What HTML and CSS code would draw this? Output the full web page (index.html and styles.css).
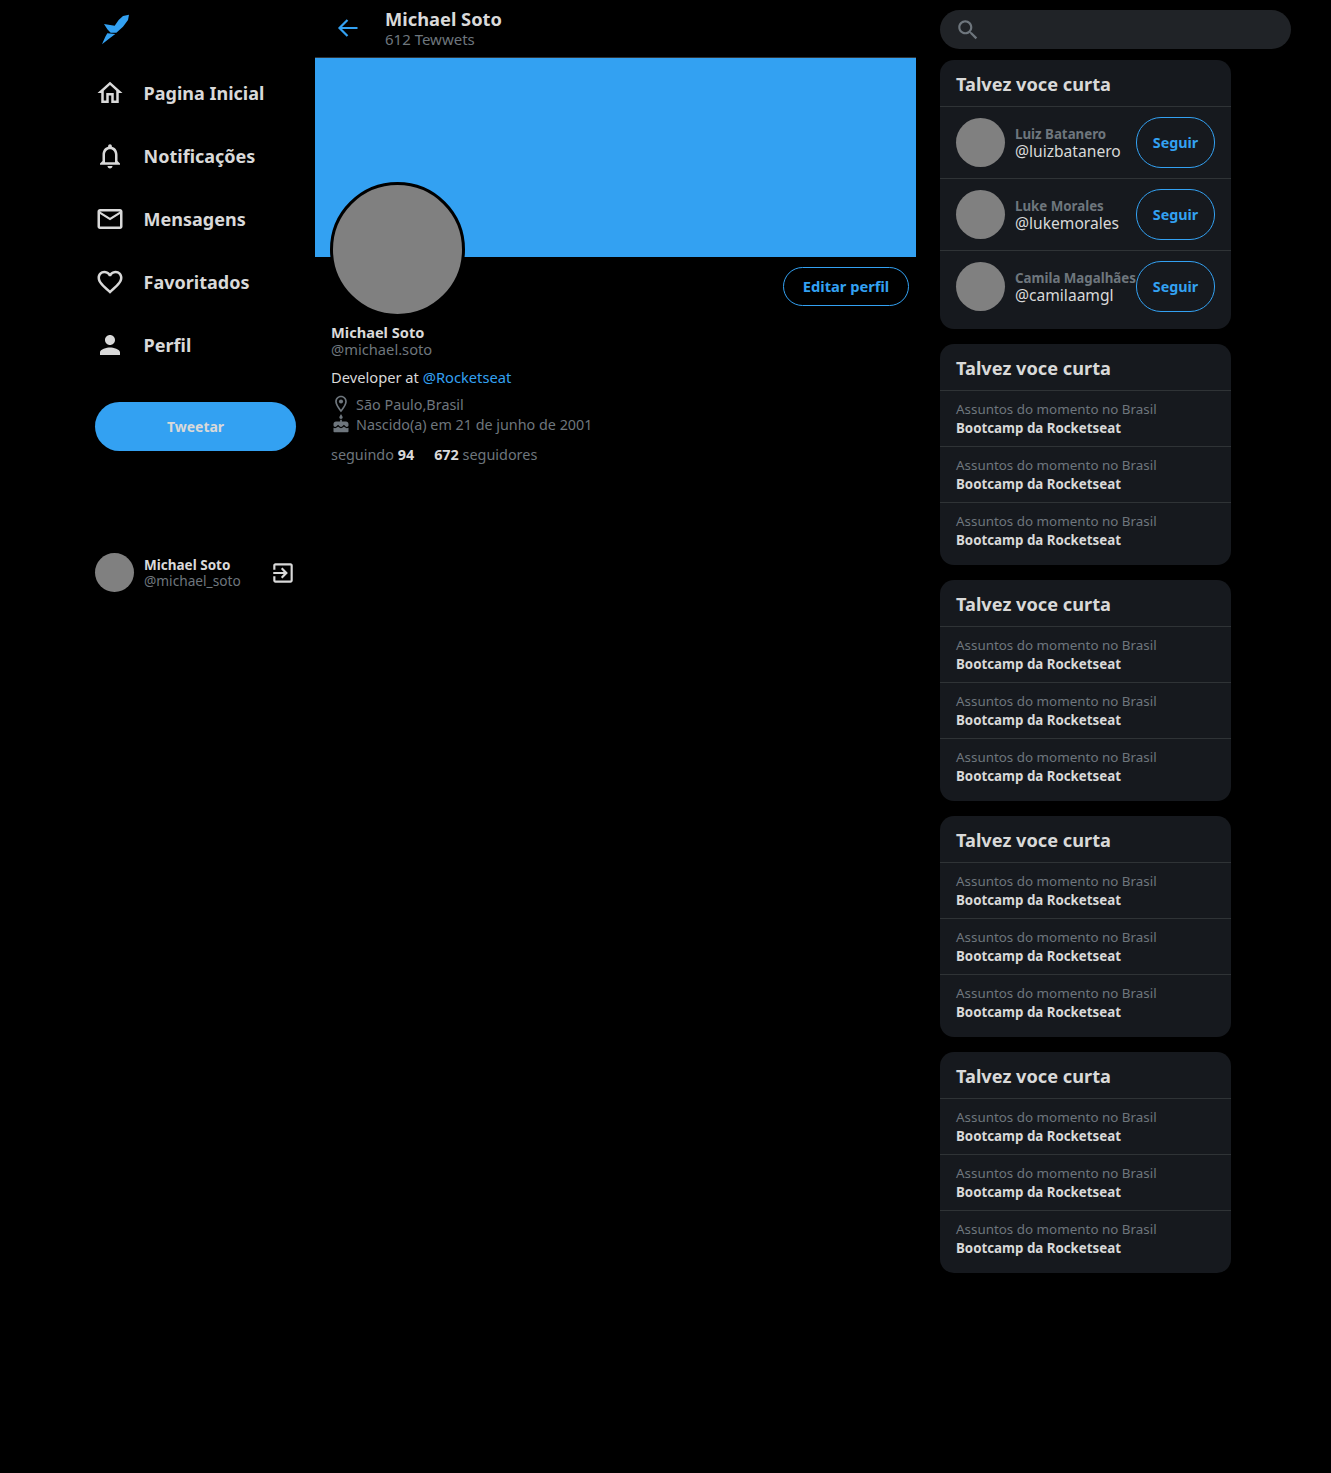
FILE: index.html
```html
<!DOCTYPE html>
<html lang="en">
<head>
    <meta charset="UTF-8">
    <title>Michael Soto</title>
    <link rel="stylesheet" href="styles.css">
</head>
<body>
    <div class="layout">
        <aside class="sidebar">
            <svg class="logo" viewBox="0 0 108 114"><path fill="#33a1f2" d="M93 14l-3 16-15 20-20 18H38L28 58 18 42l32 5 12-17 13-12zM28 70l24 2-17 13-23 18 10-23z"/></svg>
            <nav class="nav">
                <a class="nav-item"><svg class="nav-icon" viewBox="0 0 24 24"><path d="M12 5.690l5 4.500V18h-2v-6H9v6H7v-7.810l5-4.500M12 3L2 12h3v8h6v-6h2v6h6v-8h3L12 3z"/></svg><span>Pagina Inicial</span></a>
                <a class="nav-item"><svg class="nav-icon" viewBox="0 0 24 24"><path d="M12 22c1.100 0 2-.9 2-2h-4c0 1.100.9 2 2 2zm6-6v-5c0-3.070-1.630-5.640-4.500-6.320V4c0-.83-.67-1.500-1.500-1.500s-1.500.67-1.500 1.500v.68C7.640 5.360 6 7.920 6 11v5l-2 2v1h16v-1l-2-2zm-2 1H8v-6c0-2.480 1.510-4.500 4-4.500s4 2.020 4 4.500v6z"/></svg><span>Notificações</span></a>
                <a class="nav-item"><svg class="nav-icon" viewBox="0 0 24 24"><path d="M22 6c0-1.100-.9-2-2-2H4c-1.100 0-2 .9-2 2v12c0 1.100.9 2 2 2h16c1.100 0 2-.9 2-2V6zm-2 0l-8 5-8-5h16zm0 12H4V8l8 5 8-5v10z"/></svg><span>Mensagens</span></a>
                <a class="nav-item"><svg class="nav-icon" viewBox="0 0 24 24"><path d="M16.500 3c-1.740 0-3.410.81-4.500 2.090C10.910 3.810 9.240 3 7.500 3 4.420 3 2 5.420 2 8.500c0 3.780 3.400 6.860 8.550 11.540L12 21.350l1.450-1.320C18.600 15.360 22 12.280 22 8.500 22 5.420 19.580 3 16.500 3zm-4.400 15.550l-.1.1-.1-.1C7.140 14.240 4 11.390 4 8.500 4 6.500 5.500 5 7.500 5c1.540 0 3.040.99 3.570 2.360h1.870C13.460 5.990 14.960 5 16.500 5c2 0 3.500 1.500 3.500 3.500 0 2.890-3.140 5.740-7.900 10.050z"/></svg><span>Favoritados</span></a>
                <a class="nav-item"><svg class="nav-icon" viewBox="0 0 24 24"><path d="M12 12c2.210 0 4-1.790 4-4s-1.790-4-4-4-4 1.790-4 4 1.790 4 4 4zm0 2c-2.670 0-8 1.340-8 4v2h16v-2c0-2.660-5.330-4-8-4z"/></svg><span>Perfil</span></a>
            </nav>
            <button class="tweet-btn">Tweetar</button>
            <div class="account">
                <div class="avatar avatar-sm"></div>
                <div class="account-text">
                    <strong>Michael Soto</strong>
                    <span>@michael_soto</span>
                </div>
                <svg class="exit-icon" viewBox="0 0 24 24"><path d="M10.090 15.590L11.500 17l5-5-5-5-1.410 1.410L12.670 11H3v2h9.670l-2.580 2.590zM19 3H5c-1.110 0-2 .9-2 2v4h2V5h14v14H5v-4H3v4c0 1.100.89 2 2 2h14c1.100 0 2-.9 2-2V5c0-1.100-.9-2-2-2z"/></svg>
            </div>
        </aside>

        <main class="main">
            <header class="main-header">
                <svg class="back-icon" viewBox="0 0 24 24"><path d="M3.500 12H21.500M11.500 4L3.500 12L11.500 20"/></svg>
                <div>
                    <h1>Michael Soto</h1>
                    <span class="tweet-count">612 Tewwets</span>
                </div>
            </header>
            <div class="banner"></div>
            <div class="profile-top">
                <div class="avatar avatar-lg"></div>
                <button class="outline-btn edit-btn">Editar perfil</button>
            </div>
            <div class="profile">
                <strong class="profile-name">Michael Soto</strong>
                <span class="profile-handle">@michael.soto</span>
                <p class="bio">Developer at <a>@Rocketseat</a></p>
                <div class="meta">
                    <svg viewBox="0 0 24 24"><path d="M12 2C8.130 2 5 5.130 5 9c0 5.250 7 13 7 13s7-7.750 7-13c0-3.870-3.130-7-7-7zM7 9c0-2.760 2.240-5 5-5s5 2.240 5 5c0 2.880-2.880 7.190-5 9.880C9.920 16.210 7 11.850 7 9z"/><circle cx="12" cy="9" r="2.500"/></svg>
                    <span class="place">São Paulo,Brasil</span>
                </div>
                <div class="meta">
                    <svg viewBox="0 0 24 24"><path d="M12 6c1.110 0 2-.9 2-2 0-.38-.1-.73-.29-1.030L12 0l-1.710 2.970c-.19.3-.29.65-.29 1.030 0 1.100.9 2 2 2zm4.600 9.990l-1.070-1.070-1.080 1.070c-1.300 1.300-3.580 1.310-4.890 0l-1.070-1.070-1.090 1.070C6.750 16.640 5.880 17 4.960 17c-.73 0-1.400-.23-1.960-.61V21c0 .55.45 1 1 1h16c.55 0 1-.45 1-1v-4.610c-.56.38-1.230.61-1.960.61-.92 0-1.790-.36-2.440-1.010zM18 9h-5V7h-2v2H6c-1.660 0-3 1.340-3 3v1.540c0 1.080.88 1.960 1.960 1.960.52 0 1.020-.2 1.380-.57l2.140-2.130 2.130 2.130c.74.74 2.030.74 2.770 0l2.140-2.130 2.130 2.130c.37.37.86.57 1.380.57 1.080 0 1.960-.88 1.960-1.960V12C21 10.340 19.660 9 18 9z"/></svg>
                    <span class="born">Nascido(a) em 21 de junho de 2001</span>
                </div>
                <div class="follows">
                    <span>seguindo <b>94</b></span>
                    <span><b>672</b> seguidores</span>
                </div>
            </div>
        </main>

        <aside class="right">
            <div class="search">
                <svg viewBox="0 0 24 24"><path d="M15.500 14h-.79l-.28-.27C15.410 12.590 16 11.110 16 9.500 16 5.910 13.090 3 9.500 3S3 5.910 3 9.500 5.910 16 9.500 16c1.610 0 3.090-.59 4.230-1.570l.27.28v.79l5 4.990L20.490 19l-4.990-5zm-6 0C7.010 14 5 11.990 5 9.500S7.010 5 9.500 5 14 7.010 14 9.500 11.990 14 9.500 14z"/></svg>
            </div>

            <section class="card">
                <h2>Talvez voce curta</h2>
                <div class="user-row">
                    <div class="avatar avatar-md"></div>
                    <div class="user-text"><strong>Luiz Batanero</strong><span>@luizbatanero</span></div>
                    <button class="outline-btn follow-btn">Seguir</button>
                </div>
                <div class="user-row">
                    <div class="avatar avatar-md"></div>
                    <div class="user-text"><strong>Luke Morales</strong><span>@lukemorales</span></div>
                    <button class="outline-btn follow-btn">Seguir</button>
                </div>
                <div class="user-row">
                    <div class="avatar avatar-md"></div>
                    <div class="user-text"><strong>Camila Magalhães</strong><span>@camilaamgl</span></div>
                    <button class="outline-btn follow-btn">Seguir</button>
                </div>
            </section>

            <section class="card">
                <h2>Talvez voce curta</h2>
                <div class="trend"><span>Assuntos do momento no Brasil</span><strong>Bootcamp da Rocketseat</strong></div>
                <div class="trend"><span>Assuntos do momento no Brasil</span><strong>Bootcamp da Rocketseat</strong></div>
                <div class="trend"><span>Assuntos do momento no Brasil</span><strong>Bootcamp da Rocketseat</strong></div>
            </section>

            <section class="card">
                <h2>Talvez voce curta</h2>
                <div class="trend"><span>Assuntos do momento no Brasil</span><strong>Bootcamp da Rocketseat</strong></div>
                <div class="trend"><span>Assuntos do momento no Brasil</span><strong>Bootcamp da Rocketseat</strong></div>
                <div class="trend"><span>Assuntos do momento no Brasil</span><strong>Bootcamp da Rocketseat</strong></div>
            </section>

            <section class="card">
                <h2>Talvez voce curta</h2>
                <div class="trend"><span>Assuntos do momento no Brasil</span><strong>Bootcamp da Rocketseat</strong></div>
                <div class="trend"><span>Assuntos do momento no Brasil</span><strong>Bootcamp da Rocketseat</strong></div>
                <div class="trend"><span>Assuntos do momento no Brasil</span><strong>Bootcamp da Rocketseat</strong></div>
            </section>

            <section class="card">
                <h2>Talvez voce curta</h2>
                <div class="trend"><span>Assuntos do momento no Brasil</span><strong>Bootcamp da Rocketseat</strong></div>
                <div class="trend"><span>Assuntos do momento no Brasil</span><strong>Bootcamp da Rocketseat</strong></div>
                <div class="trend"><span>Assuntos do momento no Brasil</span><strong>Bootcamp da Rocketseat</strong></div>
            </section>
        </aside>
    </div>
</body>
</html>
```

FILE: styles.css
```css
* {
    box-sizing: border-box;
}
body {
    margin: 0;
    background-color: #000;
    color: #d9d9d9;
    font-family: "Noto Sans", sans-serif;
    font-size: 14px;
    height: 1473px;
    overflow: hidden;
}
.layout {
    display: flex;
    padding-left: 95px;
}

/* sidebar */
.sidebar {
    width: 201px;
    margin-right: 19px;
    flex-shrink: 0;
}
.logo {
    display: block;
    width: 36px;
    height: 38px;
    margin: 10px 0 0 3px;
}
.nav {
    display: flex;
    flex-direction: column;
    margin-top: 13px;
}
.nav-item {
    display: flex;
    align-items: center;
    height: 63px;
    font-size: 18px;
    font-weight: 700;
}
.nav-icon {
    width: 30px;
    height: 30px;
    margin-right: 18.600px;
    fill: #d9d9d9;
}
.tweet-btn {
    display: block;
    width: 201px;
    height: 49px;
    margin-top: 26px;
    border: 0;
    border-radius: 25px;
    background-color: #33a1f2;
    color: #d9d9d9;
    font-family: inherit;
    font-size: 14px;
    font-weight: 700;
}
.account {
    display: flex;
    align-items: center;
    margin-top: 102px;
}
.avatar {
    border-radius: 50%;
    background-color: #808080;
    flex-shrink: 0;
}
.avatar-sm {
    width: 39px;
    height: 39px;
    margin-right: 10px;
}
.account-text {
    display: flex;
    flex-direction: column;
    flex: 1;
    line-height: 16px;
}
.account-text strong {
    font-size: 13.500px;
}
.account-text span {
    color: #6e767d;
    font-size: 13.700px;
}
.exit-icon {
    width: 26px;
    height: 26px;
    fill: #d9d9d9;
}

/* main column */
.main {
    width: 601px;
    margin-right: 24px;
    flex-shrink: 0;
}
.main-header {
    display: flex;
    align-items: center;
    height: 58px;
    padding: 0 0 0 21px;
    border-bottom: 1px solid #2f3336;
}
.back-icon {
    width: 24px;
    height: 24px;
    margin: 0 25px 2px 0;
    fill: none;
    stroke: #33a1f2;
    stroke-width: 2.200;
}
.main-header h1 {
    margin: 1px 0 0;
    font-size: 18.300px;
    line-height: 20px;
}
.tweet-count {
    display: block;
    color: #6e767d;
    font-size: 15px;
    line-height: 20px;
}
.banner {
    height: 199px;
    background-color: #33a1f2;
}
.profile-top {
    display: flex;
    justify-content: space-between;
    align-items: flex-start;
    height: 67px;
    padding: 10px 7px 0 15px;
}
.avatar-lg {
    width: 135px;
    height: 135px;
    margin-top: -85px;
    border: 3px solid #000;
}
.outline-btn {
    border: 1px solid #33a1f2;
    border-radius: 25px;
    background: none;
    color: #33a1f2;
    font-family: inherit;
    font-weight: 700;
}
.edit-btn {
    width: 126px;
    height: 39px;
    padding-bottom: 3px;
    font-size: 14.700px;
}
.profile {
    padding-left: 16px;
}
.profile-name {
    display: block;
    font-size: 14.600px;
    line-height: 16px;
}
.profile-handle {
    display: block;
    color: #6e767d;
    font-size: 14.700px;
    line-height: 18px;
}
.bio {
    margin: 10px 0 7px;
    font-size: 14.700px;
    line-height: 19px;
}
.bio a {
    color: #33a1f2;
}
.meta {
    display: flex;
    align-items: center;
    height: 20px;
    color: #6e767d;
}
.meta svg {
    width: 20px;
    height: 20px;
    margin-right: 5px;
    fill: #6e767d;
}
.place {
    font-size: 14.400px;
}
.born {
    font-size: 14.350px;
}
.follows {
    display: flex;
    gap: 20px;
    margin-top: 12px;
    color: #6e767d;
    font-size: 14.400px;
    line-height: 18px;
}
.follows b {
    color: #d9d9d9;
}

/* right column */
.right {
    width: 351px;
    padding-top: 10px;
}
.search {
    display: flex;
    align-items: center;
    height: 39px;
    margin-bottom: 11px;
    padding-left: 15px;
    border-radius: 20px;
    background-color: #202327;
}
.search svg {
    width: 26px;
    height: 26px;
    fill: #6e767d;
}
.card {
    width: 291px;
    margin-bottom: 15px;
    border-radius: 14px;
    background-color: #16191e;
    overflow: hidden;
}
.card h2 {
    margin: 0;
    padding: 0 16px;
    font-size: 18.200px;
    line-height: 49px;
    height: 47px;
    border-bottom: 1px solid #2f3336;
}
.user-row {
    display: flex;
    align-items: center;
    height: 72px;
    padding: 0 16px;
    border-bottom: 1px solid #2f3336;
}
.user-row:last-child {
    border-bottom: 0;
    height: 78px;
    padding-bottom: 7px;
}
.avatar-md {
    width: 49px;
    height: 49px;
    margin-right: 10px;
}
.user-text {
    display: flex;
    flex-direction: column;
    flex: 1;
    min-width: 0;
    padding-top: 2px;
    white-space: nowrap;
}
.user-text strong {
    color: #6e767d;
    font-size: 13.300px;
    line-height: 15px;
}
.user-text span {
    font-size: 15.600px;
    line-height: 19px;
}
.follow-btn {
    width: 79px;
    height: 51px;
    font-size: 14.300px;
    flex-shrink: 0;
}
.trend {
    display: flex;
    flex-direction: column;
    height: 56px;
    padding: 9px 16px 0;
    border-bottom: 1px solid #2f3336;
}
.trend:last-child {
    border-bottom: 0;
    height: 62px;
}
.trend span {
    color: #6e767d;
    font-size: 13.400px;
    line-height: 19px;
}
.trend strong {
    font-size: 13.300px;
    line-height: 19px;
}
```
